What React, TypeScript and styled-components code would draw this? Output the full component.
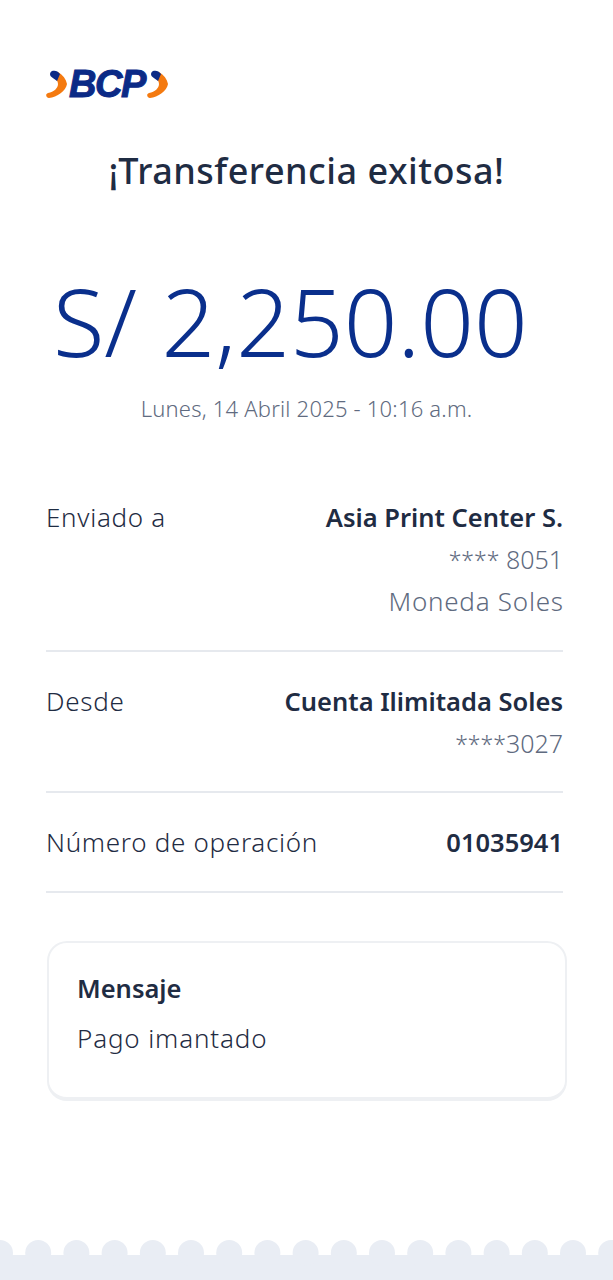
import React from "react";
import styled, { createGlobalStyle } from "styled-components";

const Global = createGlobalStyle`
  html, body { margin: 0; padding: 0; background: #ffffff; }
  body { font-family: "Noto Sans", "Open Sans", sans-serif; }
`;
const Page = styled.main`
  position: relative; width: 613px; height: 1280px; overflow: hidden; box-sizing: border-box;
  padding: 65px 50px 0 46px; display: flex; flex-direction: column; background: #fff;
`;
const Logo = styled.div`display: flex; align-items: center; height: 38px;`;
const LogoText = styled.span`
  font-family: "Liberation Sans", sans-serif; font-style: italic; font-weight: 700; font-size: 38px;
  line-height: 38px; color: #0b2a86; letter-spacing: -1.4px; -webkit-text-stroke: 1px #0b2a86; margin: 0 2px 0 1px;
`;
const Title = styled.h1`
  margin: 44px -4px 0 0; text-align: center; font-size: 36px; line-height: 48px; font-weight: 500; color: #1f2c43; letter-spacing: 0.5px;
`;
const Amount = styled.div`
  margin: 66px 0 0 7px; font-size: 94px; line-height: 120px; font-weight: 300; color: #0a2f8c; white-space: nowrap;
`;
const DateLine = styled.div`
  margin: 11px -4px 0 0; text-align: center; font-size: 22px; line-height: 32px; font-weight: 300; letter-spacing: 0.2px; color: #5f6b80;
`;
const Details = styled.section`margin-top: 44px; display: flex; flex-direction: column;`;
const Row = styled.div<{ $tail: number }>`
  display: flex; justify-content: space-between; padding: 28px 0 ${(p) => p.$tail}px; border-bottom: 2px solid #e6e9ee;
`;
const Label = styled.span`font-size: 26px; line-height: 42px; font-weight: 300; letter-spacing: 0.7px; color: #1f2c43;`;
const Values = styled.div`display: flex; flex-direction: column; align-items: flex-end;`;
const Strong = styled.span`font-size: 25.5px; line-height: 42px; font-weight: 600; color: #1f2c43;`;
const Muted = styled.span`font-size: 26px; line-height: 42px; font-weight: 300; letter-spacing: 0.75px; margin-right: -0.75px; color: #5f6b80;`;
const Digits = styled(Muted)`letter-spacing: 0; margin-right: 0; font-size: 25px;`;
const Stars = styled.span`font-size: 23px; line-height: 1; letter-spacing: 0;`;
const Card = styled.section`
  margin: 48px -4px 0 1px; height: 160px; box-sizing: border-box; padding: 24px 28px;
  border: 2px solid #eef0f3; border-bottom-width: 4px; border-radius: 20px;
  display: flex; flex-direction: column; gap: 8px;
`;
const CardTitle = styled.div`font-size: 25.5px; line-height: 42px; font-weight: 600; color: #1f2c43;`;
const CardText = styled.div`font-size: 26px; line-height: 42px; font-weight: 300; letter-spacing: 0.85px; color: #1f2c43;`;
const Scallop = styled.svg`position: absolute; left: 0; bottom: 0; display: block;`;

const bumps = Array.from({ length: 17 }, (_, i) => i * 38.2);

const Chevron = () => (
  <svg width="22" height="28" viewBox="0 0 22 28">
    <path d="M12 2 C17 5 20 9 21 14 C20 21 11 27 3 28 C0 28 -1 24 2 23 C8 22 12 18 12 14 C12 11 10 9 8 8 Z" fill="#f47a10" />
    <path d="M6 1 C9 0 12 1 14 4 L11 11 C9 9 6 8 4.500 6 C3.500 4 4 2 6 1 Z" fill="#0b2a86" />
  </svg>
);

export default function App() {
  return (
    <>
      <Global />
      <Page>
        <Logo>
          <Chevron />
          <LogoText>BCP</LogoText>
          <Chevron />
        </Logo>
        <Title>¡Transferencia exitosa!</Title>
        <Amount>S/ 2,250.00</Amount>
        <DateLine>Lunes, 14 Abril 2025 - 10:16 a.m.</DateLine>
        <Details>
          <Row $tail={28}>
            <Label>Enviado a</Label>
            <Values>
              <Strong>Asia Print Center S.</Strong>
              <Digits><Stars>****</Stars> 8051</Digits>
              <Muted>Moneda Soles</Muted>
            </Values>
          </Row>
          <Row $tail={27}>
            <Label>Desde</Label>
            <Values>
              <Strong>Cuenta Ilimitada Soles</Strong>
              <Digits><Stars>****</Stars>3027</Digits>
            </Values>
          </Row>
          <Row $tail={28}>
            <Label>Número de operación</Label>
            <Strong>01035941</Strong>
          </Row>
        </Details>
        <Card>
          <CardTitle>Mensaje</CardTitle>
          <CardText>Pago imantado</CardText>
        </Card>
        <Scallop width="613" height="40" viewBox="0 0 613 40">
          <rect x="0" y="15" width="613" height="25" fill="#e9edf4" />
          {bumps.map((x) => (
            <circle key={x} cx={x} cy="13" r="13" fill="#e9edf4" />
          ))}
        </Scallop>
      </Page>
    </>
  );
}
